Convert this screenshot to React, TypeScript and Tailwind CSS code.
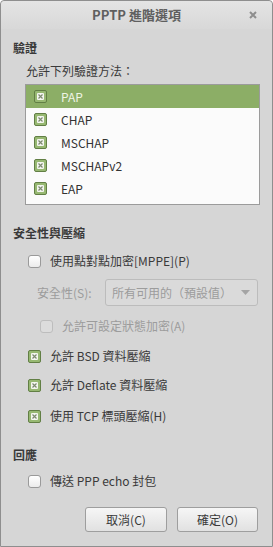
import React from 'react';

const font = { fontFamily: '"Noto Sans CJK TC", "Noto Sans", sans-serif' };

const Checked: React.FC = () => (
    <span className="flex h-[13px] w-[13px] shrink-0 items-center justify-center rounded-[2px] border border-[#627f45] bg-[#97b872]">
        <span className="flex h-[7px] w-[7px] items-center justify-center rounded-[1px] bg-[#f4f6f0]">
            <svg width="5" height="5" viewBox="0 0 5 5">
                <path d="M0.5 0.5 L4.5 4.5 M4.5 0.5 L0.5 4.5" stroke="#7d8a70" strokeWidth="1.2" />
            </svg>
        </span>
    </span>
);

const Unchecked: React.FC<{ disabled?: boolean }> = ({ disabled }) => (
    <span
        className={`block h-[13px] w-[13px] shrink-0 rounded-[3px] border ${
            disabled ? 'border-[#bdbdbd] bg-[#dcdcdc]' : 'border-[#9a9a9a] bg-gradient-to-b from-[#ffffff] to-[#ececec]'
        }`}
    />
);

const methods = ['PAP', 'CHAP', 'MSCHAP', 'MSCHAPv2', 'EAP'];

export default function App() {
    return (
        <div
            className="flex h-[547px] w-[273px] flex-col rounded-t-[4px] border border-[#8e8e8e] bg-[#d6d6d6] text-[12px] text-[#3a3a3a]"
            style={font}
        >
            {/* title bar */}
            <div className="relative flex h-[28px] shrink-0 items-center justify-center rounded-t-[4px] bg-gradient-to-b from-[#e4e4e4] to-[#d8d8d8]">
                <span className="text-[13px] font-bold text-[#5f5f5f]">PPTP 進階選項</span>
                <svg className="absolute right-[15px] top-[10px]" width="8" height="8" viewBox="0 0 8 8">
                    <path d="M1 1 L7 7 M7 1 L1 7" stroke="#8e8e8e" strokeWidth="2" />
                </svg>
            </div>

            <div className="flex flex-col">
                <div className="mt-[11px] flex h-[16px] items-center pl-[12px] font-bold">驗證</div>
                <div className="mt-[7px] flex h-[16px] items-center pl-[25px]">允許下列驗證方法：</div>

                <div className="ml-[24px] mt-[5px] h-[121px] w-[235px] border border-[#9b9b9b] bg-[#fbfbfb]">
                    {methods.map((m, i) => (
                        <div
                            key={m}
                            className={`flex h-[23px] items-center gap-[14px] pl-[8px] ${
                                i === 0 ? 'bg-[#8cae66] text-[#eef4e4]' : 'text-[#333333]'
                            }`}
                        >
                            <Checked />
                            <span>{m}</span>
                        </div>
                    ))}
                </div>

                <div className="mt-[20px] flex h-[16px] items-center pl-[12px] font-bold">安全性與壓縮</div>

                <div className="mt-[10px] flex h-[20px] items-center gap-[9px] pl-[27px]">
                    <Unchecked />
                    <span>使用點對點加密[MPPE](P)</span>
                </div>

                <div className="mt-[8px] flex h-[27px] items-center pl-[36px] text-[#9c9c9c]">
                    <span className="w-[68px]">安全性(S):</span>
                    <div className="flex h-[27px] w-[153px] items-center justify-between rounded-[3px] border border-[#bcbcbc] bg-[#dadada] pl-[6px] pr-[7px]">
                        <span>所有可用的（預設值）</span>
                        <svg width="9" height="5" viewBox="0 0 9 5">
                            <path d="M0 0 L9 0 L4.5 5 Z" fill="#a4a4a4" />
                        </svg>
                    </div>
                </div>

                <div className="mt-[10px] flex h-[20px] items-center gap-[9px] pl-[39px] text-[#9c9c9c]">
                    <Unchecked disabled />
                    <span>允許可設定狀態加密(A)</span>
                </div>

                <div className="mt-[10px] flex h-[20px] items-center gap-[9px] pl-[27px]">
                    <Checked />
                    <span>允許 BSD 資料壓縮</span>
                </div>
                <div className="mt-[9px] flex h-[20px] items-center gap-[9px] pl-[27px]">
                    <Checked />
                    <span>允許 Deflate 資料壓縮</span>
                </div>
                <div className="mt-[11px] flex h-[20px] items-center gap-[9px] pl-[27px]">
                    <Checked />
                    <span>使用 TCP 標頭壓縮(H)</span>
                </div>

                <div className="mt-[21px] flex h-[16px] items-center pl-[12px] font-bold">回應</div>
                <div className="mt-[8px] flex h-[20px] items-center gap-[9px] pl-[27px]">
                    <Unchecked />
                    <span>傳送 PPP echo 封包</span>
                </div>

                <div className="mt-[16px] flex justify-end gap-[10px] pr-[14px]">
                    <button className="flex h-[25px] w-[82px] items-center justify-center rounded-[3px] border border-[#9e9e9e] bg-gradient-to-b from-[#f6f6f6] to-[#e1e1e1] text-[#3a3a3a]">
                        取消(C)
                    </button>
                    <button className="flex h-[25px] w-[81px] items-center justify-center rounded-[3px] border border-[#9e9e9e] bg-gradient-to-b from-[#f6f6f6] to-[#e1e1e1] text-[#3a3a3a]">
                        確定(O)
                    </button>
                </div>
            </div>
        </div>
    );
}
